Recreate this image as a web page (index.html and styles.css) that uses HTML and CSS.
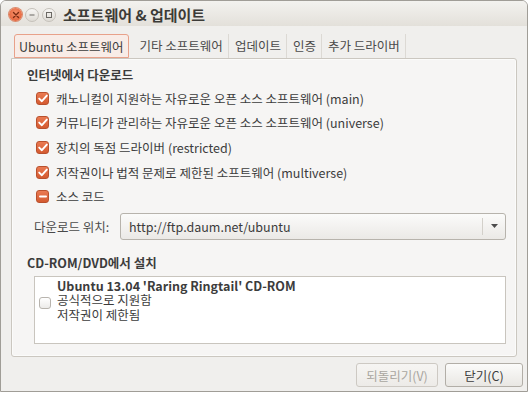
FILE: index.html
```html
<html>
<head>
<meta charset="utf-8">
<link rel="stylesheet" href="styles.css">
<title>소프트웨어 &amp; 업데이트</title>
</head>
<body>
<div class="window">
	<div class="titlebar">
		<div class="controls">
			<span class="btn-close">
				<svg width="8" height="8" viewBox="0 0 8 8"><path d="M1.5 1.5 L6.5 6.5 M6.5 1.5 L1.5 6.5" stroke="#7a2a12" stroke-width="1.4" stroke-linecap="round"/></svg>
			</span>
			<span class="btn-round">
				<svg width="8" height="8" viewBox="0 0 8 8"><path d="M1.5 4 H6.5" stroke="#6b6964" stroke-width="1.2"/></svg>
			</span>
			<span class="btn-round">
				<svg width="8" height="8" viewBox="0 0 8 8"><rect x="1.5" y="1.5" width="5" height="5" fill="none" stroke="#6b6964" stroke-width="1"/></svg>
			</span>
		</div>
		<div class="title">소프트웨어 &amp; 업데이트</div>
	</div>

	<div class="content">
		<div class="tabs">
			<div class="tab active">Ubuntu 소프트웨어</div>
			<div class="tab">기타 소프트웨어</div>
			<div class="tab">업데이트</div>
			<div class="tab">인증</div>
			<div class="tab">추가 드라이버</div>
		</div>

		<div class="frame">
			<div class="heading">인터넷에서 다운로드</div>
			<div class="checks">
				<div class="row"><span class="box checked"><svg width="10" height="9" viewBox="0 0 10 9"><path d="M1.2 4.6 L3.9 7.2 L8.8 1.6" fill="none" stroke="#fff" stroke-width="1.9" stroke-linecap="round" stroke-linejoin="round"/></svg></span>캐노니컬이 지원하는 자유로운 오픈 소스 소프트웨어 (main)</div>
				<div class="row"><span class="box checked"><svg width="10" height="9" viewBox="0 0 10 9"><path d="M1.2 4.6 L3.9 7.2 L8.8 1.6" fill="none" stroke="#fff" stroke-width="1.9" stroke-linecap="round" stroke-linejoin="round"/></svg></span>커뮤니티가 관리하는 자유로운 오픈 소스 소프트웨어 (universe)</div>
				<div class="row"><span class="box checked"><svg width="10" height="9" viewBox="0 0 10 9"><path d="M1.2 4.6 L3.9 7.2 L8.8 1.6" fill="none" stroke="#fff" stroke-width="1.9" stroke-linecap="round" stroke-linejoin="round"/></svg></span>장치의 독점 드라이버 (restricted)</div>
				<div class="row"><span class="box checked"><svg width="10" height="9" viewBox="0 0 10 9"><path d="M1.2 4.6 L3.9 7.2 L8.8 1.6" fill="none" stroke="#fff" stroke-width="1.9" stroke-linecap="round" stroke-linejoin="round"/></svg></span>저작권이나 법적 문제로 제한된 소프트웨어 (multiverse)</div>
				<div class="row"><span class="box checked"><svg width="10" height="9" viewBox="0 0 10 9"><path d="M2 4.5 H8" stroke="#fff" stroke-width="2" stroke-linecap="round"/></svg></span>소스 코드</div>
			</div>

			<div class="location">
				<span class="loc-label">다운로드 위치:</span>
				<div class="combo">
					<span class="combo-text">http://ftp.daum.net/ubuntu</span>
					<span class="combo-arrow"><svg width="7" height="4" viewBox="0 0 7 4"><path d="M0 0 H7 L3.5 4 Z" fill="#4c4c4c"/></svg></span>
				</div>
			</div>

			<div class="heading cd">CD-ROM/DVD에서 설치</div>
			<div class="listbox">
				<span class="box empty"></span>
				<div class="cd-info">
					<div class="cd-name">Ubuntu 13.04 'Raring Ringtail' CD-ROM</div>
					<div>공식적으로 지원함</div>
					<div>저작권이 제한됨</div>
				</div>
			</div>
		</div>

		<div class="buttons">
			<button class="button disabled">되돌리기(V)</button>
			<button class="button">닫기(C)</button>
		</div>
	</div>
</div>
</body>
</html>
```

FILE: styles.css
```css
body {
	margin: 0;
	background-color: #ffffff;
	font-family: "Noto Sans CJK KR", "Noto Sans", sans-serif;
	font-size: 12.5px;
	color: #3c3c3c;
}

.window {
	width: 526px;
	height: 390px;
	border: 1px solid #a09d97;
	border-radius: 6px 6px 0 0;
	background-color: #f0efed;
	overflow: hidden;
}

.titlebar {
	height: 25px;
	display: flex;
	align-items: center;
	background: linear-gradient(#f3f2ef, #e3e0da);
}

.controls {
	display: flex;
	align-items: center;
	gap: 3px;
	margin-left: 8px;
	margin-top: 2px;
}

.btn-close {
	width: 13px;
	height: 13px;
	border-radius: 50%;
	background: radial-gradient(circle at 50% 40%, #f6916b, #e0562d);
	box-shadow: 0 0 0 1px #d98a6c;
	display: flex;
	align-items: center;
	justify-content: center;
}

.btn-round {
	width: 12px;
	height: 12px;
	border-radius: 50%;
	background: linear-gradient(#f7f6f4, #dedbd5);
	border: 1px solid #c5c1ba;
	display: flex;
	align-items: center;
	justify-content: center;
}

.title {
	margin-left: 7px;
	margin-top: 1px;
	font-weight: bold;
	font-size: 15px;
	color: #3c3b37;
}

.content {
	padding: 7px 10px 0 10px;
}

.tabs {
	display: flex;
	align-items: flex-end;
	height: 25px;
	padding-left: 3px;
}

.tab {
	height: 24px;
	line-height: 23px;
	padding: 0 5px 0 6px;
	border-right: 1px solid #dcd9d4;
	color: #4a4a4a;
	white-space: nowrap;
	box-sizing: border-box;
}

.tab.active {
	border: 1px solid #e8a18a;
	border-radius: 3px 3px 0 0;
	background-color: #f8ece7;
	color: #3c3c3c;
	padding: 0 4px;
	margin-right: 5px;
}

.frame {
	height: 299px;
	border: 1px solid #cbc7c0;
	border-radius: 0 3px 3px 3px;
	background-color: #f6f5f4;
	padding: 6px 10px 0 15px;
	box-sizing: border-box;
	box-shadow: inset 0 0 0 1px #fbfbfa;
}

.heading {
	font-weight: bold;
	height: 20px;
	line-height: 20px;
}

.checks {
	padding-left: 9px;
	padding-top: 1px;
}

.row {
	display: flex;
	align-items: center;
	height: 24.6px;
	white-space: nowrap;
}

.box {
	width: 13px;
	height: 13px;
	border-radius: 3px;
	margin-right: 7px;
	flex: none;
	display: flex;
	align-items: center;
	justify-content: center;
	box-sizing: border-box;
}

.box.checked {
	background: linear-gradient(#ea7a52, #d45a30);
	border: 1px solid #b9502d;
}

.box.empty {
	width: 12px;
	height: 12px;
	background: linear-gradient(#ffffff, #ecebe9);
	border: 1px solid #b8b4ae;
}

.location {
	display: flex;
	align-items: center;
	margin-top: 4px;
	padding-left: 7px;
}

.loc-label {
	width: 86px;
	color: #4a4a4a;
}

.combo {
	flex: 1;
	height: 27px;
	display: flex;
	align-items: center;
	border: 1px solid #b7b3ac;
	border-radius: 3px;
	background: linear-gradient(#fbfbfa, #ebe9e6);
	box-sizing: border-box;
}

.combo-text {
	flex: 1;
	padding-left: 8px;
}

.combo-arrow {
	width: 22px;
	height: 17px;
	border-left: 1px solid #d3d0ca;
	display: flex;
	align-items: center;
	justify-content: center;
}

.heading.cd {
	margin-top: 13px;
}

.listbox {
	margin: 3px 0 0 7px;
	height: 68px;
	background-color: #ffffff;
	border: 1px solid #c9c5be;
	box-sizing: border-box;
	display: flex;
	align-items: flex-start;
	padding: 2px 0 0 4px;
	line-height: 14.5px;
}

.listbox .box {
	margin-top: 18px;
	margin-right: 6px;
}

.cd-name {
	font-weight: bold;
}

.buttons {
	display: flex;
	justify-content: flex-end;
	gap: 7px;
	margin-top: 6px;
	margin-right: -6px;
}

.button {
	font-family: "Noto Sans CJK KR", "Noto Sans", sans-serif;
	font-size: 12.5px;
	height: 24px;
	border: 1px solid #b2aea7;
	border-radius: 3px;
	background: linear-gradient(#fbfbfa, #e9e7e3);
	color: #3c3c3c;
	padding: 0;
	width: 78px;
}

.button.disabled {
	width: 82px;
	color: #a9a6a0;
	border-color: #cdc9c3;
	background: linear-gradient(#f6f5f3, #edebe8);
}
```
